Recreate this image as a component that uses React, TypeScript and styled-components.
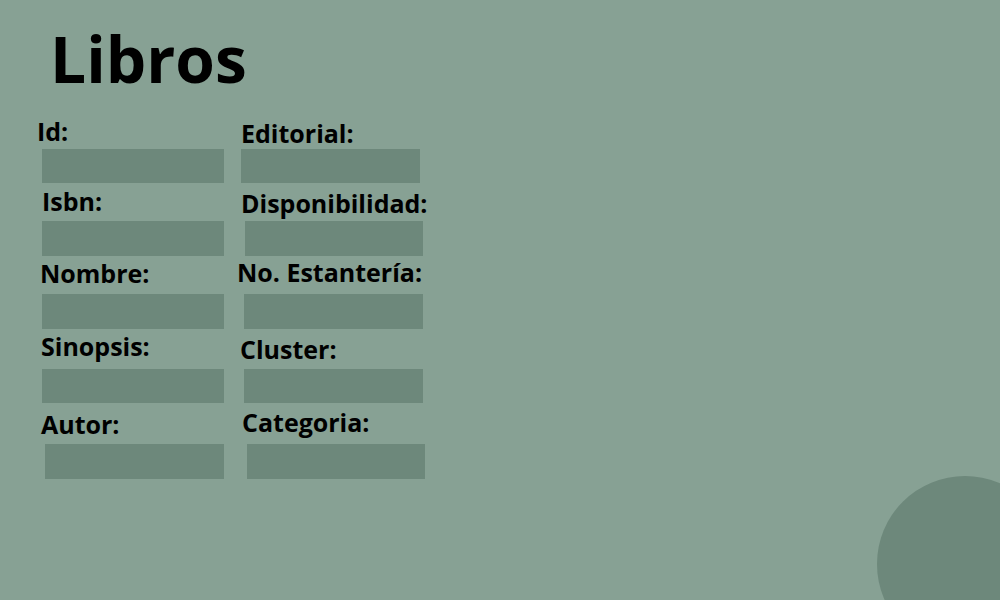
import React from "react";
import styled, { createGlobalStyle } from "styled-components";

const Global = createGlobalStyle`
  html, body { margin: 0; padding: 0; }
  body { font-family: "Open Sans", "Liberation Sans", sans-serif; }
`;

const Page = styled.div`
  position: relative;
  width: 1000px;
  height: 600px;
  overflow: hidden;
  background: #87a194;
  color: #000;
  font-family: "Open Sans", "Liberation Sans", sans-serif;
`;

const Title = styled.h1`
  margin: 0;
  padding: 27px 0 0 50px;
  font-size: 64px;
  line-height: 64px;
  font-weight: 700;
  letter-spacing: 0;
`;

const Form = styled.div`
  display: flex;
  padding-left: 37px;
  margin-top: 28px;
`;

const Column = styled.div<{ $w: number }>`
  display: flex;
  flex-direction: column;
  width: ${(p) => p.$w}px;
`;

const Label = styled.label<{ $x: number; $mt: number }>`
  display: block;
  margin: ${(p) => p.$mt}px 0 0 ${(p) => p.$x}px;
  font-size: 25px;
  line-height: 25px;
  font-weight: 700;
  white-space: nowrap;
`;

const Box = styled.div<{ $x: number; $mt: number; $w: number; $h: number }>`
  margin: ${(p) => p.$mt}px 0 0 ${(p) => p.$x}px;
  width: ${(p) => p.$w}px;
  height: ${(p) => p.$h}px;
  background: #6d887b;
`;

const Circle = styled.div`
  position: absolute;
  left: 877px;
  top: 476px;
  width: 176px;
  height: 176px;
  border-radius: 50%;
  background: #6d887b;
`;

type F = { label: string; lx: number; lmt: number; bx: number; bmt: number; bw: number; bh: number };

const col1: F[] = [
  { label: "Id:", lx: 0, lmt: 0, bx: 5, bmt: 5, bw: 182, bh: 34 },
  { label: "Isbn:", lx: 5, lmt: 6, bx: 5, bmt: 7, bw: 182, bh: 35 },
  { label: "Nombre:", lx: 3, lmt: 5, bx: 5, bmt: 8, bw: 182, bh: 35 },
  { label: "Sinopsis:", lx: 4, lmt: 5, bx: 5, bmt: 10, bw: 182, bh: 34 },
  { label: "Autor:", lx: 4, lmt: 9, bx: 8, bmt: 7, bw: 179, bh: 35 },
];

const col2: F[] = [
  { label: "Editorial:", lx: 3, lmt: 2, bx: 3, bmt: 3, bw: 179, bh: 34 },
  { label: "Disponibilidad:", lx: 3, lmt: 8, bx: 7, bmt: 5, bw: 178, bh: 35 },
  { label: "No. Estantería:", lx: -1, lmt: 4, bx: 6, bmt: 9, bw: 179, bh: 35 },
  { label: "Cluster:", lx: 2, lmt: 8, bx: 6, bmt: 7, bw: 179, bh: 34 },
  { label: "Categoria:", lx: 4, lmt: 7, bx: 9, bmt: 9, bw: 178, bh: 35 },
];

const renderCol = (fields: F[]) =>
  fields.map((f) => (
    <React.Fragment key={f.label}>
      <Label $x={f.lx} $mt={f.lmt}>{f.label}</Label>
      <Box $x={f.bx} $mt={f.bmt} $w={f.bw} $h={f.bh} />
    </React.Fragment>
  ));

export default function App() {
  return (
    <Page>
      <Global />
      <Title>Libros</Title>
      <Form>
        <Column $w={201}>{renderCol(col1)}</Column>
        <Column $w={220}>{renderCol(col2)}</Column>
      </Form>
      <Circle />
    </Page>
  );
}
